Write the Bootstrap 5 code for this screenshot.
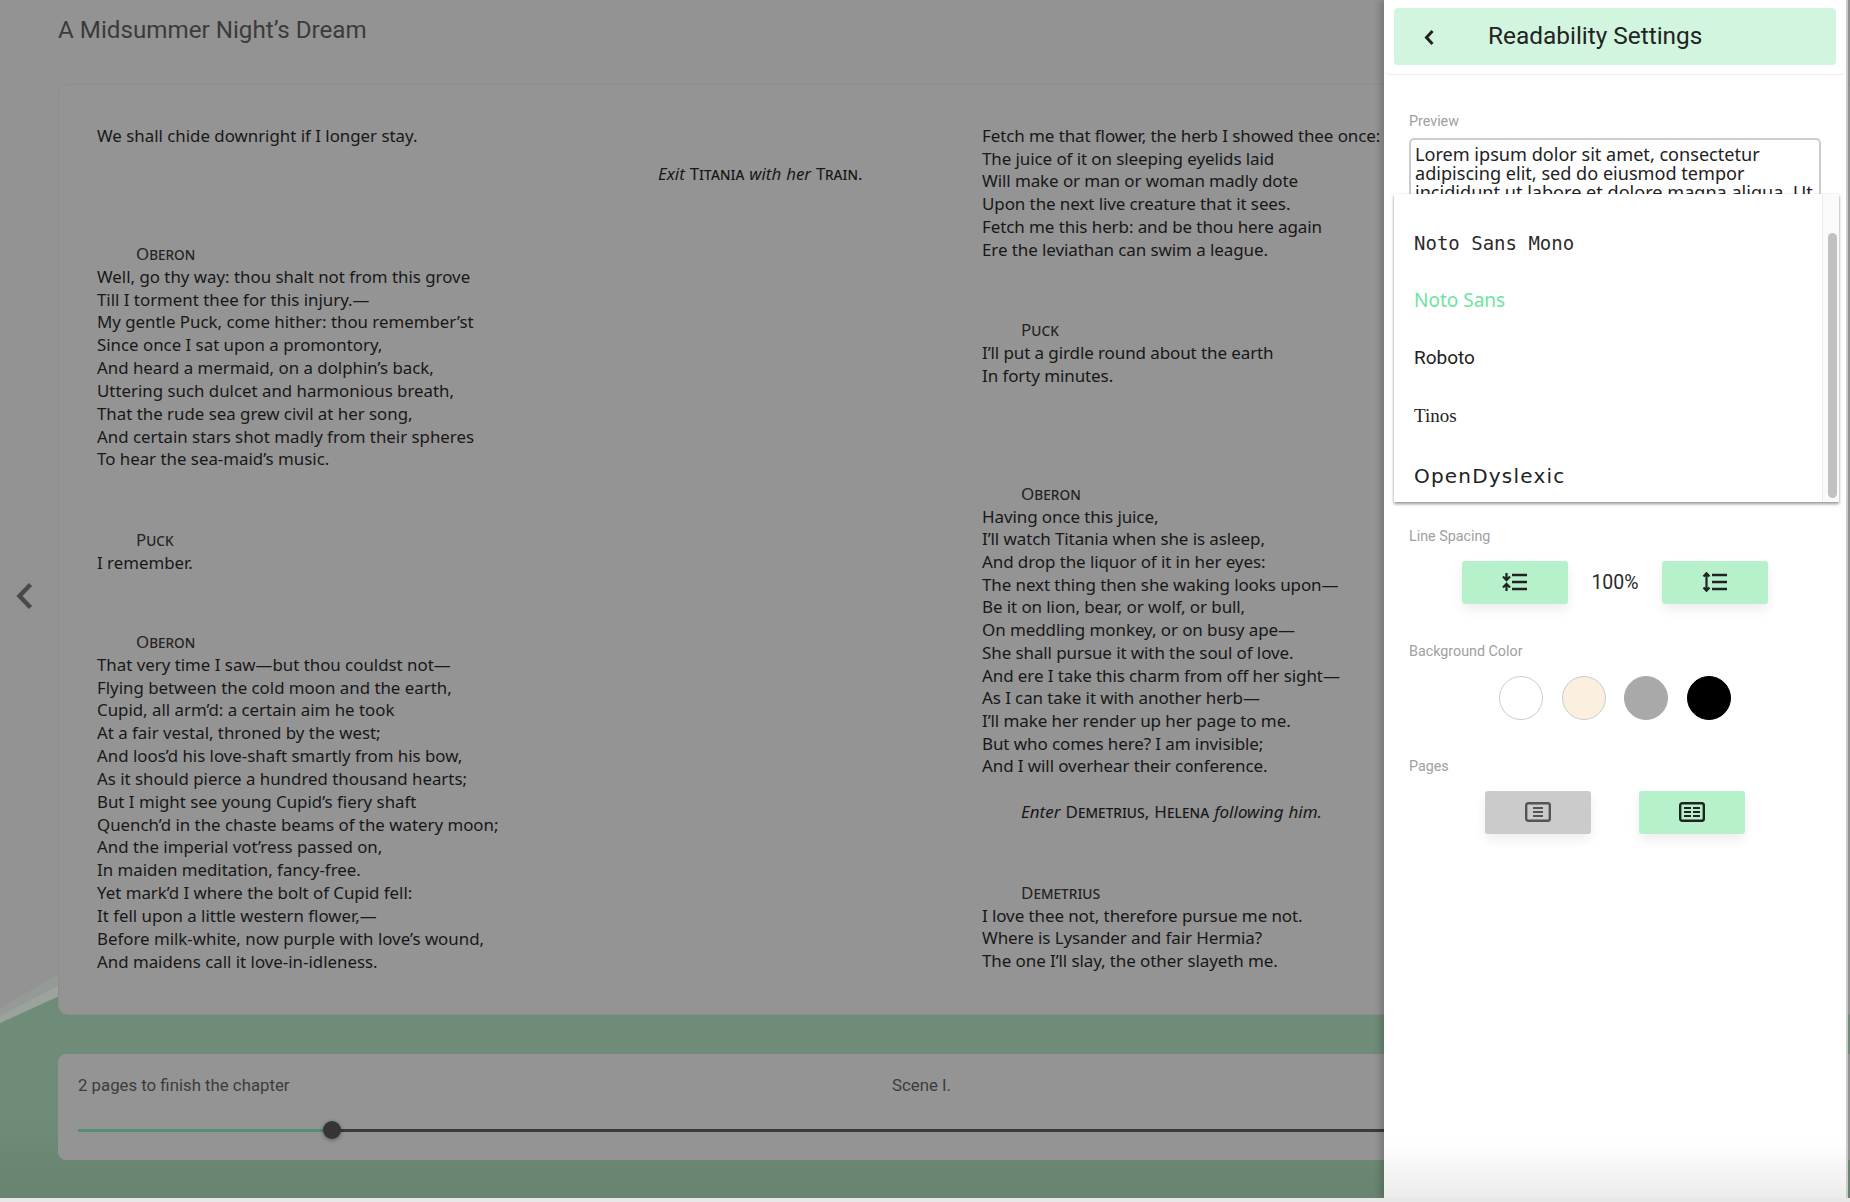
<!DOCTYPE html>
<html lang="en">
<head>
<meta charset="utf-8">
<title>A Midsummer Night's Dream</title>
<link href="https://cdn.jsdelivr.net/npm/bootstrap@5.3.0/dist/css/bootstrap.min.css" rel="stylesheet">
<style>
html,body{height:1202px;overflow:hidden;background:#fff}
.app-stage{position:relative;width:1850px;height:1198px;overflow:hidden;background:linear-gradient(180deg,#939393 0,#939393 950px,#6f8c79 951px,#6f8c79 1120px,#68836f 1198px)}
.app-foot{height:4px;background:#e8e8e8}
.wave-art{position:absolute;left:0;top:950px;width:59px;height:80px}
.reader-main{position:relative;padding:0 0 0 58px}
.book-title{height:84px;margin:0;padding-top:14px;font:400 24.2px/32px Roboto,sans-serif;color:#3b3b3b}
.page-sheet{height:931px;width:1800px;background:#949494;border:1px solid #8d8d8d;border-radius:10px;padding:40px 0 0 38px;font:400 16.85px/22.85px "Noto Sans",sans-serif;color:#181818;overflow:hidden}
.col-left{width:885px;flex:none}
.col-right{width:400px;flex:none;white-space:nowrap;font-size:17px;line-height:22.7px}
.col-right .vl{letter-spacing:-.1px}
.vl{display:block;white-space:nowrap}
.spk{display:block;font-variant:small-caps;padding-left:39px;color:#242424;line-height:24px}
.gap-a{margin-top:56px}
.gap-b{margin-top:57px}
.gap-c{margin-top:54.6px}
.gap-spk-lg{margin-top:94px}
.stage-dir{display:block;margin-top:15px;white-space:nowrap;word-spacing:.6px}
.stage-dir i{font-style:italic}
.stage-dir span{font-variant:small-caps}
.dir-center{padding-left:561px}
.dir-indent{padding-left:39px;margin-top:23px}
.prog-sheet{margin-top:39px;height:106px;width:1800px;background:#949494;border-radius:8px;padding:19px 20px 0;font:400 16.8px/24px Roboto,sans-serif;color:#3c3c3c}
.prog-labels{display:flex}
.prog-left{width:814px}
.prog-track{position:relative;margin-top:32px;height:3px;background:#3a3a3a}
.prog-done{position:absolute;left:0;top:0;height:3px;width:255px;background:#4f9171}
.prog-knob{position:absolute;left:245px;top:-8px;width:18px;height:18px;border-radius:50%;background:#353535;box-shadow:0 1px 4px rgba(0,0,0,.4)}
.prev-chev{position:absolute;left:14px;top:580px;width:20px;height:32px}
.side-panel{position:absolute;left:1384px;top:0;width:464px;height:1198px;background:linear-gradient(180deg,#fff 0,#fff 1140px,#ececec 1198px);border-right:2px solid #ccc;box-shadow:-4px 0 6px rgba(0,0,0,.18)}
.side-head{height:75px;padding:8px 10px 0;border-bottom:1px solid #eee;border-radius:0 0 6px 6px}
.side-head-in{height:57px;background:#d2f5e0;border-radius:4px;padding-left:29px;padding-right:0}
.side-head-in svg{width:12px;height:18px;flex:none}
.side-title{margin:-2px 0 0 53px;font:400 24.4px/32px Roboto,sans-serif;color:#232323}
.side-body{position:relative;padding:0 25px}
.opt-label{display:block;font:400 14.3px/18px Roboto,sans-serif;color:#a0a0a0}
.lbl-preview{padding-top:37px}
.preview-box{margin-top:8px;height:120px;overflow:hidden;border:2px solid #ccc;border-radius:5px;padding:5px 0 0 4px;font:400 18.1px/19px "Noto Sans",sans-serif;color:#222}
.font-menu{position:absolute;left:10px;top:119px;width:445px;height:308px;background:#fff;box-shadow:0 2px 3px rgba(0,0,0,.4),0 0 2px rgba(0,0,0,.08);overflow:hidden}
.font-item{position:absolute;left:20px;white-space:nowrap;color:#222;line-height:30px;font-size:19px}
.fi-mono{top:34px;font-family:"DejaVu Sans Mono",monospace;font-size:19px;color:#2c2c2c}
.fi-noto{top:91px;font-family:"Noto Sans",sans-serif;color:#6fe3a0}
.fi-rob{top:149px;font-family:Roboto,sans-serif}
.fi-tin{top:207px;font-family:"Liberation Serif",serif}
.fi-dys{top:267px;font-family:"DejaVu Sans",sans-serif;letter-spacing:1.2px;font-size:20px}
.menu-track{position:absolute;right:0;top:0;bottom:0;width:17px;background:#fafafa;border-left:1px solid #ececec}
.menu-thumb{position:absolute;left:5px;top:39px;width:9px;height:265px;border-radius:5px;background:#c1c1c1}
.lbl-line{margin-top:268.5px}
.ctrl-row{display:flex;align-items:center}
.ls-row{margin-top:16px;padding-left:53px}
.mint-btn{width:106px;height:43px;flex:none;display:flex;align-items:center;justify-content:center;background:#b7f1cc;border:0;border-radius:3px;padding:0;box-shadow:0 6px 12px rgba(0,0,0,.07)}
.mint-btn.off{background:#cbcbcb}
.mint-btn svg{width:26px;height:20px}
.pct-val{width:94px;text-align:center;font:400 19.5px/24px Roboto,sans-serif;color:#2a2a2a;padding-top:2px}
.lbl-bg{margin-top:38px}
.swatch-row{margin-top:16px;padding-left:90px;gap:18.5px}
.swatch{width:44px;height:44px;flex:none;border-radius:50%;border:1px solid #ccc}
.lbl-pages{margin-top:37px}
.pg-row{margin-top:16px;padding-left:76px;gap:48px}
</style>
</head>
<body>
<div class="app-stage">
<svg class="wave-art" viewBox="0 0 59 80"><polygon points="0,0 59,0 59,46 0,73" fill="#939393"/><polygon points="0,58 59,24 59,35 0,66" fill="#969a97"/><polygon points="0,66 59,35 59,46 0,73" fill="#9aa39c"/></svg>
<main class="reader-main">
<h1 class="book-title">A Midsummer Night’s Dream</h1>
<div class="page-sheet d-flex">
<div class="col-left">
<span class="vl">We shall chide downright if I longer stay.</span>
<span class="stage-dir dir-center"><i>Exit</i> <span>Titania</span> <i>with her</i> <span>Train</span>.</span>
<span class="spk gap-a">Oberon</span>
<span class="vl">Well, go thy way: thou shalt not from this grove</span>
<span class="vl">Till I torment thee for this injury.—</span>
<span class="vl">My gentle Puck, come hither: thou remember’st</span>
<span class="vl">Since once I sat upon a promontory,</span>
<span class="vl">And heard a mermaid, on a dolphin’s back,</span>
<span class="vl">Uttering such dulcet and harmonious breath,</span>
<span class="vl">That the rude sea grew civil at her song,</span>
<span class="vl">And certain stars shot madly from their spheres</span>
<span class="vl">To hear the sea-maid’s music.</span>
<span class="spk gap-b">Puck</span>
<span class="vl">I remember.</span>
<span class="spk gap-c">Oberon</span>
<span class="vl">That very time I saw—but thou couldst not—</span>
<span class="vl">Flying between the cold moon and the earth,</span>
<span class="vl">Cupid, all arm’d: a certain aim he took</span>
<span class="vl">At a fair vestal, throned by the west;</span>
<span class="vl">And loos’d his love-shaft smartly from his bow,</span>
<span class="vl">As it should pierce a hundred thousand hearts;</span>
<span class="vl">But I might see young Cupid’s fiery shaft</span>
<span class="vl">Quench’d in the chaste beams of the watery moon;</span>
<span class="vl">And the imperial vot’ress passed on,</span>
<span class="vl">In maiden meditation, fancy-free.</span>
<span class="vl">Yet mark’d I where the bolt of Cupid fell:</span>
<span class="vl">It fell upon a little western flower,—</span>
<span class="vl">Before milk-white, now purple with love’s wound,</span>
<span class="vl">And maidens call it love-in-idleness.</span>
</div>
<div class="col-right">
<span class="vl">Fetch me that flower, the herb I showed thee once:</span>
<span class="vl">The juice of it on sleeping eyelids laid</span>
<span class="vl">Will make or man or woman madly dote</span>
<span class="vl">Upon the next live creature that it sees.</span>
<span class="vl">Fetch me this herb: and be thou here again</span>
<span class="vl">Ere the leviathan can swim a league.</span>
<span class="spk gap-b">Puck</span>
<span class="vl">I’ll put a girdle round about the earth</span>
<span class="vl">In forty minutes.</span>
<span class="spk gap-spk-lg">Oberon</span>
<span class="vl">Having once this juice,</span>
<span class="vl">I’ll watch Titania when she is asleep,</span>
<span class="vl">And drop the liquor of it in her eyes:</span>
<span class="vl">The next thing then she waking looks upon—</span>
<span class="vl">Be it on lion, bear, or wolf, or bull,</span>
<span class="vl">On meddling monkey, or on busy ape—</span>
<span class="vl">She shall pursue it with the soul of love.</span>
<span class="vl">And ere I take this charm from off her sight—</span>
<span class="vl">As I can take it with another herb—</span>
<span class="vl">I’ll make her render up her page to me.</span>
<span class="vl">But who comes here? I am invisible;</span>
<span class="vl">And I will overhear their conference.</span>
<span class="stage-dir dir-indent"><i>Enter</i> <span>Demetrius</span>, <span>Helena</span> <i>following him.</i></span>
<span class="spk gap-b">Demetrius</span>
<span class="vl">I love thee not, therefore pursue me not.</span>
<span class="vl">Where is Lysander and fair Hermia?</span>
<span class="vl">The one I’ll slay, the other slayeth me.</span>
</div>
</div>
<div class="prog-sheet">
<div class="prog-labels"><span class="prog-left">2 pages to finish the chapter</span><span>Scene I.</span></div>
<div class="prog-track"><div class="prog-done"></div><div class="prog-knob"></div></div>
</div>
</main>
<svg class="prev-chev" viewBox="0 0 20 32"><path d="M16.500 4.500 5.500 16 16.500 27.500" fill="none" stroke="#4a4a4a" stroke-width="4.500"/></svg>

<aside class="side-panel">
<div class="side-head">
<div class="side-head-in d-flex align-items-center">
<svg viewBox="0 0 12 18"><path d="M9.500 3 3.500 9.500 9.500 16" fill="none" stroke="#222" stroke-width="3"/></svg>
<h2 class="side-title">Readability Settings</h2>
</div>
</div>
<div class="side-body">
<span class="opt-label lbl-preview">Preview</span>
<div class="preview-box">Lorem ipsum dolor sit amet, consectetur adipiscing elit, sed do eiusmod tempor incididunt ut labore et dolore magna aliqua. Ut</div>
<div class="font-menu">
<span class="font-item fi-mono">Noto Sans Mono</span>
<span class="font-item fi-noto">Noto Sans</span>
<span class="font-item fi-rob">Roboto</span>
<span class="font-item fi-tin">Tinos</span>
<span class="font-item fi-dys">OpenDyslexic</span>
<div class="menu-track"><div class="menu-thumb"></div></div>
</div>
<span class="opt-label lbl-line">Line Spacing</span>
<div class="ctrl-row ls-row">
<button class="mint-btn" type="button" aria-label="Decrease line spacing"><svg viewBox="0 0 26 20"><path d="M10 3h15M10 10h15M10 17h15" stroke="#222" stroke-width="2.600" fill="none"/><path d="M4.500 1v6M1 4.600l3.500 3.600L8 4.600M4.500 19v-6M1 15.400l3.500-3.600L8 15.400" stroke="#222" stroke-width="2.200" fill="none"/></svg></button>
<span class="pct-val">100%</span>
<button class="mint-btn" type="button" aria-label="Increase line spacing"><svg viewBox="0 0 26 20"><path d="M10 3h15M10 10h15M10 17h15" stroke="#222" stroke-width="2.600" fill="none"/><path d="M4.500 1v18M1.500 4.500l3-3.200 3 3.200M1.500 15.500l3 3.200 3-3.200" stroke="#222" stroke-width="2.200" fill="none"/></svg></button>
</div>
<span class="opt-label lbl-bg">Background Color</span>
<div class="ctrl-row swatch-row">
<span class="swatch" style="background:#fff"></span>
<span class="swatch" style="background:#fbf0df"></span>
<span class="swatch" style="background:#a9a9a9;border-color:#a9a9a9"></span>
<span class="swatch" style="background:#000;border-color:#000"></span>
</div>
<span class="opt-label lbl-pages">Pages</span>
<div class="ctrl-row pg-row">
<button class="mint-btn off" type="button" aria-label="One page"><svg viewBox="0 0 26 20" style="opacity:.7"><rect x="1.200" y="1.200" width="23.600" height="17.600" rx="2" fill="none" stroke="#222" stroke-width="2.400"/><path d="M8 6h10M8 10h10M8 14h10" stroke="#222" stroke-width="2.200" fill="none"/></svg></button>
<button class="mint-btn" type="button" aria-label="Two pages"><svg viewBox="0 0 26 20"><rect x="1.200" y="1.200" width="23.600" height="17.600" rx="2" fill="none" stroke="#222" stroke-width="2.400"/><path d="M5 6h7M5 10h7M5 14h7M14 6h7M14 10h7M14 14h7" stroke="#222" stroke-width="2.200" fill="none"/></svg></button>
</div>
</div>
</aside>
</div>
<div class="app-foot"></div>
<script src="https://cdn.jsdelivr.net/npm/bootstrap@5.3.0/dist/js/bootstrap.bundle.min.js"></script>
</body>
</html>
